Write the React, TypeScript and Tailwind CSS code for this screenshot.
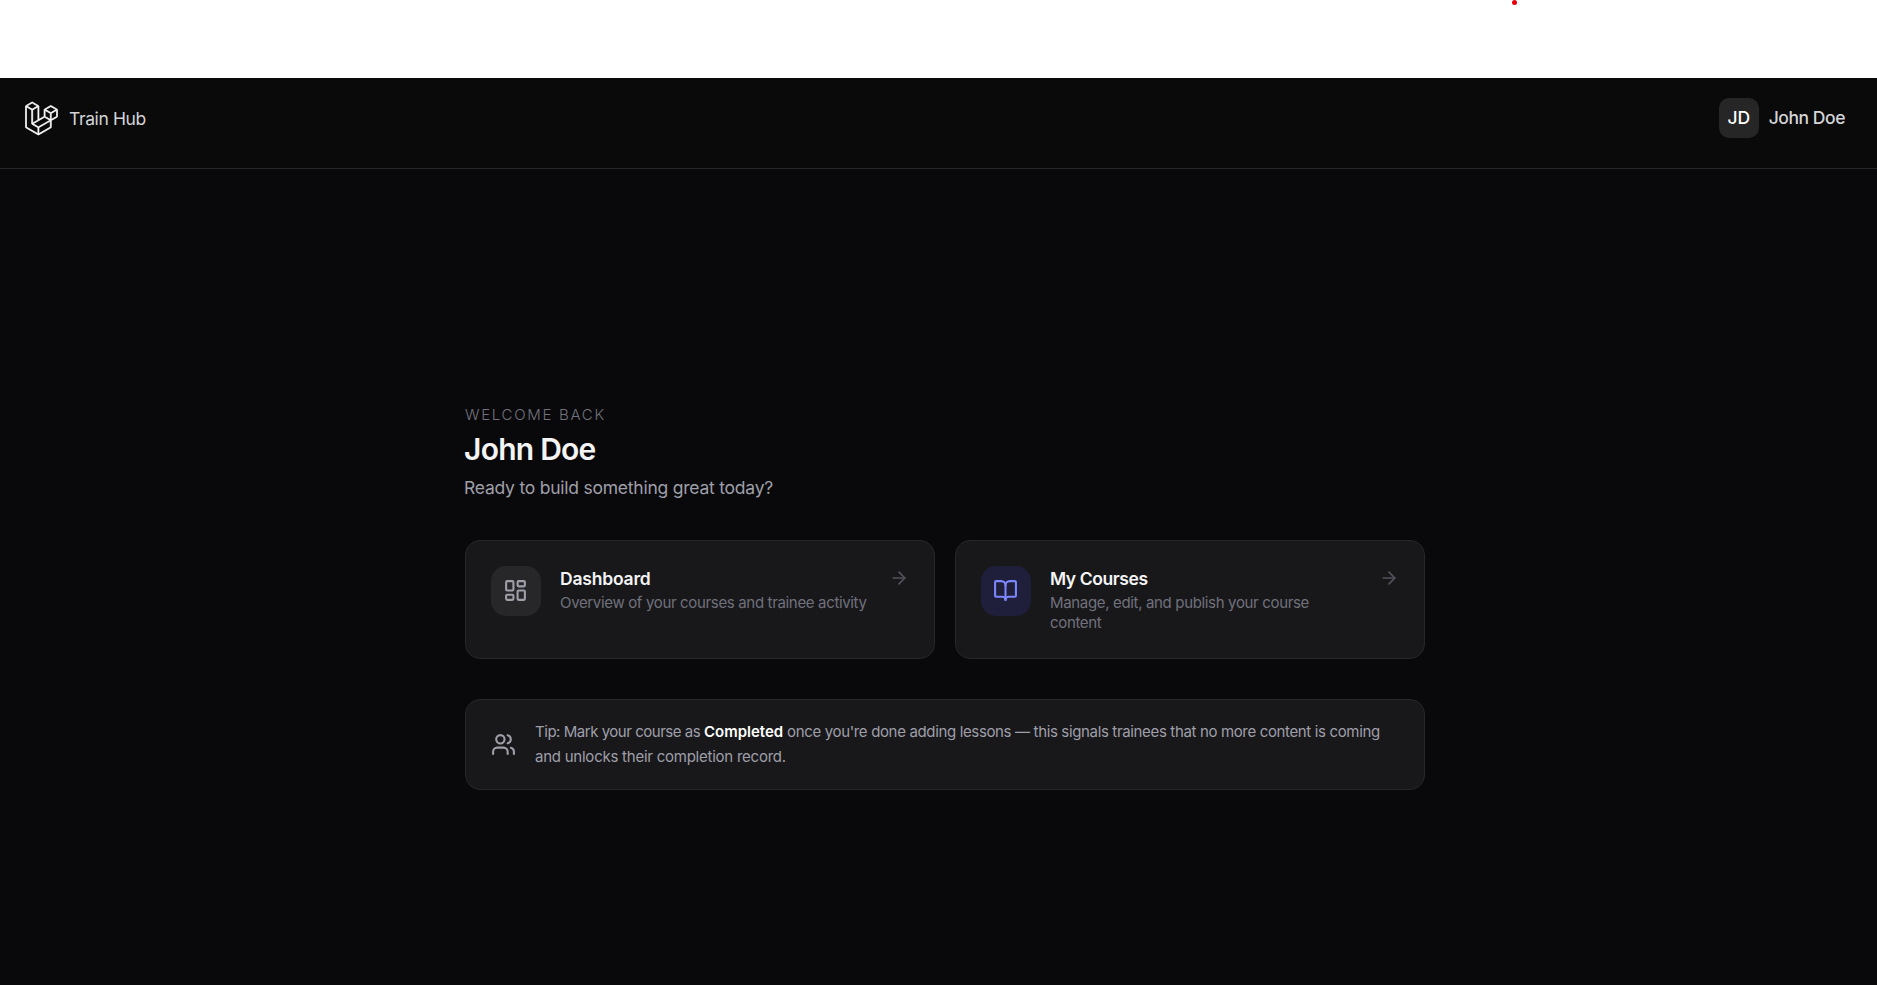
import React from 'react';
import { ArrowRight, BookOpen, LayoutDashboard, Users } from 'lucide-react';
import { SiLaravel } from 'react-icons/si';

const cards = [
  {
    icon: <LayoutDashboard size={25} className="text-zinc-400" />,
    iconBg: "bg-zinc-800",
    title: "Dashboard",
    titleClass: "tracking-[-0.2px]",
    description: "Overview of your courses and trainee activity",
  },
  {
    icon: <BookOpen size={25} className="text-[#7c86ff]" />,
    iconBg: "bg-[#1f1e3b]",
    title: "My Courses",
    titleClass: "tracking-[-0.42px]",
    description: "Manage, edit, and publish your course content",
  },
];

const Header: React.FC = () => {
  return (
    <header className="flex h-[91px] items-start justify-between border-b border-zinc-800 bg-[#0a0a0a] pl-[25px] pr-8 pt-5">
      <div className="flex h-10 items-center gap-[11px]">
        <SiLaravel size={33} stroke="currentColor" strokeWidth={0.5} className="mt-px overflow-visible text-white" />
        <span className="pt-[2px] text-[17.5px] tracking-[-0.38px] text-zinc-300 whitespace-nowrap">Train Hub</span>
      </div>
      <div className="flex h-10 items-center gap-[10px]">
        <span className="flex h-10 w-10 items-center justify-center rounded-[10px] bg-[#262626] pt-px text-[17.5px] font-medium text-white">JD</span>
        <span className="text-[17.5px] font-medium tracking-[-0.45px] text-zinc-300 whitespace-nowrap">John Doe</span>
      </div>
    </header>
  );
};

const App: React.FC = () => {
  return (
    <div className="flex h-[985px] flex-col overflow-hidden bg-zinc-950 font-['Inter',sans-serif]">
      <div className="relative h-[78px] shrink-0 bg-white">
        <span className="absolute left-[1512px] top-0 h-[5px] w-[5px] rounded-full bg-red-600" />
      </div>
      <Header />

      <main className="ml-[465px] w-[960px] pt-[236px]">
        <p className="h-5 text-[15px] font-light leading-5 tracking-[1.7px] text-zinc-500 whitespace-nowrap">WELCOME BACK</p>
        <h1 className="-ml-px mt-[5px] h-[38px] text-[30px] font-semibold leading-[38px] tracking-[-0.75px] text-zinc-100 whitespace-nowrap">John Doe</h1>
        <p className="-ml-px mt-[7px] h-[25px] text-[17.5px] leading-[25px] tracking-[-0.23px] text-zinc-400 whitespace-nowrap">Ready to build something great today?</p>

        <div className="mt-10 grid grid-cols-2 gap-5">
          {cards.map((card) => (
            <a key={card.title} href="#" className="flex h-[119px] items-start gap-[19px] rounded-[15px] border border-zinc-800 bg-zinc-900 p-[25px]">
              <div className={`flex h-[50px] w-[50px] shrink-0 items-center justify-center rounded-[15px] pb-px pr-px ${card.iconBg}`}>
                {card.icon}
              </div>
              <div className="flex-1">
                <h2 className={`text-[17.5px] font-semibold leading-[25px] text-zinc-100 ${card.titleClass}`}>{card.title}</h2>
                <p className="mt-[2px] max-w-[309px] text-[15px] leading-5 tracking-[-0.34px] text-zinc-500">{card.description}</p>
              </div>
              <ArrowRight size={20} className="ml-[-4px] mt-[2px] shrink-0 text-zinc-600" />
            </a>
          ))}
        </div>

        <div className="mt-10 flex h-[91px] items-center gap-[19px] rounded-[15px] border border-zinc-800 bg-zinc-900 px-[25px]">
          <Users size={25} className="shrink-0 text-zinc-400" />
          <p className="pb-[2px] text-[15px] leading-[25px] tracking-[-0.24px] text-zinc-400">
            <span className="tracking-[-0.35px] whitespace-nowrap">
              <span className="tracking-[-0.47px]">Tip: Mark your course as </span>
              <strong className="font-semibold tracking-[0px] text-white">Completed</strong> once you're done adding lessons — this signals trainees that no more content is coming
            </span>
            <br />
            and unlocks their completion record.
          </p>
        </div>
      </main>
    </div>
  );
};

export default App;
